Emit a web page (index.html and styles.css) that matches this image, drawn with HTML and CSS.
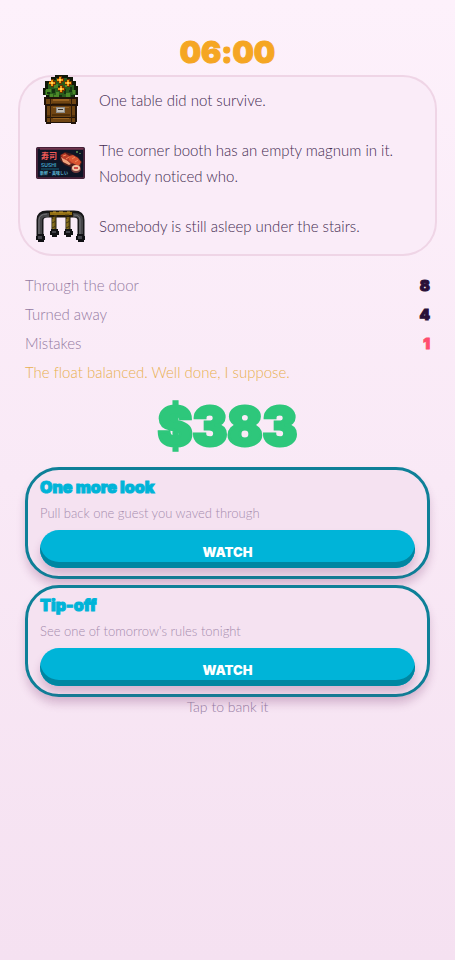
FILE: index.html
```
<!DOCTYPE html>
<html lang="en">
<head>
  <meta charset="UTF-8">
  <meta name="viewport" content="width=device-width, initial-scale=1">
  <title>Closing Time</title>
  <link rel="stylesheet" href="styles.css">
</head>
<body>

  <main class="summary">
    <h1 class="clock">06:00</h1>

    <ul class="events">
      <li class="event">
        <svg class="sprite" viewBox="0 0 50 50" aria-hidden="true">
          <!-- leaves -->
          <path fill="#101708" d="M15 2h4V0h13v2h5v4h3v5h2v9h-3v3H10v-3H7v-7h2V6h6z"/>
          <path fill="#295c1c" d="M16 5h4V3h11v3h5v4h2v5h2v5h-4v3H13v-3H9v-5h3V8h4z"/>
          <path fill="#4b8828" d="M10 14h5v3h-3v3h-2zM18 9h4v4h-4zM29 8h4v4h-4zM20 17h3v5h-5v-2h2zM30 18h4v4h-4zM36 15h3v4h-2zM14 19h3v3h-3zM24 3h2v2h-2z"/>
          <path fill="#14300f" d="M16 14h3v4h-3zM22 11h4v2h-4zM34 12h2v5h-3v-2h1zM28 14h2v5h-2zM11 17h3v2h-3zM23 20h3v2h-3zM35 20h3v2h-3z"/>
          <!-- flowers -->
          <path fill="#693000" d="M15 4h3v2h2v4h-2v2h-3v-2h-2V6h2zM23 1h3v2h2v4h-2v2h-3V7h-2V3h2zM31 4h3v2h2v4h-2v2h-3v-2h-2V6h2zM24 10h3v2h2v4h-2v2h-3v-2h-2v-4h2z"/>
          <path fill="#f39a12" d="M15 5h2v2h2v2h-2v2h-2V9h-2V7h2zM23 2h2v2h2v2h-2v2h-2V6h-2V4h2zM31 5h2v2h2v2h-2v2h-2V9h-2V7h2zM24 11h2v2h2v2h-2v2h-2v-2h-2v-2h2z"/>
          <path fill="#ffd55a" d="M15 7h2v2h-2zM23 4h2v2h-2zM31 7h2v2h-2zM24 13h2v2h-2z"/>
          <!-- crate -->
          <path fill="#211309" d="M8 22h34v9h-1v16h-1v2h-5v-1H15v1h-5v-2H9V30H8z"/>
          <path fill="#704513" d="M10 24h30v5H10zM11 31h28v11H11zM11 43h28v4H11z"/>
          <path fill="#986221" d="M17 24h16v2H17zM17 32h16v1H17zM17 43h16v1H17z"/>
          <path fill="#523009" d="M16 28h18v1H16zM16 39h18v2H16zM11 40h3v2h-3zM36 40h3v2h-3z"/>
          <path fill="#321c09" d="M14 24h1v23h-1zM35 24h1v23h-1zM16 30h18v1H16z"/>
          <path fill="#8e8c89" d="M20 32h9v6h-9z"/>
          <path fill="#c1bdb4" d="M21 33h7v4h-7z"/>
          <path fill="#342c27" d="M22 34h5v1h-5z"/>
        </svg>
        <p>One table did not survive.</p>
      </li>
      <li class="event">
        <svg class="sprite" viewBox="0 0 50 50" aria-hidden="true">
          <!-- neon sign -->
          <rect x="0" y="9" width="49" height="32" rx="2" fill="#191225"/>
          <rect x="1" y="10" width="47" height="30" rx="1" fill="#0e1425" stroke="#77304f"/>
          <path d="M4 11h43" stroke="#a34662"/>
          <text class="sign-kanji" x="5" y="21">寿司</text>
          <text class="sign-name" x="5" y="29">SUSHI</text>
          <path d="M5 31h18" stroke="#17637a"/>
          <text class="sign-small" x="4" y="37">新鮮・美味しい</text>
          <!-- sushi -->
          <path fill="#4d1d1c" d="M24 17l5-3 7 2 6 3 4 5-2 5-7 1-8-3-5-5z"/>
          <path fill="#f0a17c" d="M25 19l5 2 5 5-2 1-6-3z"/>
          <path fill="#b93d28" d="M25 17l4-2 6 4 3 5-2 2-4-3-6-3z"/>
          <path fill="#d95532" d="M33 18l4-1 5 3 3 4-2 4-5-2-5-4z"/>
          <path d="M27 18l3-1M30 21l3-2M36 21l3-2M39 24l3-2" stroke="#f28b5b"/>
          <ellipse cx="40" cy="31" rx="5" ry="4" fill="#773f3e"/>
          <ellipse cx="40" cy="30" rx="4" ry="3" fill="#f4c7a5"/>
          <path fill="#cf4a46" d="M38 29h4v2h-4z"/>
          <path fill="#477445" d="M40 13h2v2h-2zM43 15h2v1h-2z"/>
        </svg>
        <p>The corner booth has an empty magnum in it. Nobody noticed who.</p>
      </li>
      <li class="event">
        <svg class="sprite" viewBox="0 0 50 50" aria-hidden="true">
          <!-- outer pipe -->
          <path d="M4 37V19q0-6 7-6h27q7 0 7 6v18" fill="none" stroke="#171719" stroke-width="7"/>
          <path d="M4 36V19q0-5 7-5h27q7 0 7 5v17" fill="none" stroke="#454548" stroke-width="4"/>
          <path d="M3 35V19q0-6 8-6M44 35V19q0-5-6-5" fill="none" stroke="#77777a"/>
          <!-- inner legs -->
          <path d="M18 15v18M32 15v18" stroke="#211b0c" stroke-width="5"/>
          <path d="M18 16v16M32 16v16" stroke="#745d17" stroke-width="3"/>
          <path d="M17 18v10M31 18v10" stroke="#a28729"/>
          <path d="M16 27l4-2M30 27l4-2M16 22l4-2M30 22l4-2" stroke="#413513"/>
          <!-- feet and clamp -->
          <path fill="#111114" d="M1 33h7v2h1v4H8v2H2v-2H0v-4h1zM41 33h7v2h1v4h-1v2h-6v-2h-2v-4h1zM15 28h7v2h1v4h-2v2h-5v-2h-2v-4h1zM29 28h7v2h1v4h-2v2h-5v-2h-2v-4h1z"/>
          <path fill="#43434a" d="M2 35h4v3H2zM42 35h4v3h-4zM16 30h4v2h-4zM30 30h4v2h-4z"/>
          <path fill="#21190b" d="M13 10h24v6H13z"/>
          <path fill="#947116" d="M14 11h22v3H14z"/>
          <path d="M17 11h3M23 11h4M31 11h3" stroke="#c39c33"/>
          <path d="M18 15h3M29 14h4" stroke="#544314"/>
        </svg>
        <p>Somebody is still asleep under the stairs.</p>
      </li>
    </ul>

    <section class="report">
      <dl class="stats">
        <div class="stat"><dt>Through the door</dt><dd>8</dd></div>
        <div class="stat"><dt>Turned away</dt><dd>4</dd></div>
        <div class="stat"><dt>Mistakes</dt><dd class="bad">1</dd></div>
      </dl>
      <p class="remark">The float balanced. Well done, I suppose.</p>
      <p class="total">$383</p>

      <div class="offers">
        <article class="offer">
          <h2>One more look</h2>
          <p>Pull back one guest you waved through</p>
          <button type="button">WATCH</button>
        </article>
        <article class="offer">
          <h2>Tip-off</h2>
          <p>See one of tomorrow's rules tonight</p>
          <button type="button">WATCH</button>
        </article>
      </div>

      <p class="hint">Tap to bank it</p>
    </section>
  </main>

</body>
</html>
```
FILE: styles.css
```
* {
  box-sizing: border-box;
  margin: 0;
  padding: 0;
}

body {
  min-height: 100vh;
  background: linear-gradient(#fdf1fb, #f5e1f1);
  color: #2a1038;
  font-family: Lato, "Open Sans", sans-serif;
  font-size: 15px;
  font-weight: 300;
  font-variant-ligatures: none;
}

.summary {
  padding: 30px 18px;
}

.clock,
.stat dd,
.total,
.offer h2,
.offer button {
  font-family: Inter, "Liberation Sans", sans-serif;
  font-weight: 900;
}

.clock {
  height: 45px;
  line-height: 44px;
  font-size: 30px;
  text-align: center;
  color: #f5a623;
  -webkit-text-stroke: 1px #f5a623;
}

.events {
  display: flex;
  flex-direction: column;
  gap: 12px;
  padding: 0 18px 5px;
  list-style: none;
  border-radius: 34px;
  background: #faecf8;
  box-shadow: inset 0 0 0 2px #efd5e6;
}

.event {
  display: flex;
  align-items: center;
  gap: 13px;
  line-height: 26px;
  color: #432b50;
}

.sprite {
  flex: none;
  width: 50px;
  height: 50px;
}

.sign-kanji,
.sign-small {
  font-family: "Noto Sans CJK JP", sans-serif;
  font-weight: 700;
}

.sign-kanji {
  font-size: 8px;
  fill: #f05a57;
}

.sign-name {
  font-family: Inter, sans-serif;
  font-size: 5px;
  font-weight: 600;
  fill: #45a8cb;
}

.sign-small {
  font-size: 4px;
  fill: #5eb8d5;
}

.report {
  padding: 15px 7px 0;
}

.stat {
  display: flex;
  justify-content: space-between;
  line-height: 29px;
  color: #947aa1;
}

.stat dd {
  color: #2a1038;
  -webkit-text-stroke: 1px currentColor;
}

.stat dd.bad {
  color: #ff4d6d;
}

.remark {
  line-height: 29px;
  color: #e8b050;
}

.total {
  height: 80px;
  line-height: 80px;
  font-size: 52px;
  text-align: center;
  color: #2ec77b;
  -webkit-text-stroke: 3px #2ec77b;
}

.offers {
  display: flex;
  flex-direction: column;
  gap: 6px;
}

.offer {
  padding: 8px 12px;
  border: 3px solid #0e8098;
  border-radius: 34px;
  background: #f5e2f1;
  box-shadow: 0 7px 8px rgba(120, 50, 110, 0.24);
}

.offer h2 {
  line-height: 18px;
  font-size: 16px;
  color: #00b4d8;
  -webkit-text-stroke: 1px #00b4d8;
}

.offer p {
  margin: 4px 0;
  line-height: 26px;
  font-size: 13px;
  color: #a58cae;
}

.offer button {
  display: block;
  width: 100%;
  height: 38px;
  padding-top: 6px;
  border: 0;
  border-radius: 19px;
  background: #00b4d8;
  box-shadow: inset 0 -6px #0086a1, 0 7px 8px rgba(120, 50, 110, 0.24);
  color: #fff;
  font-size: 13px;
  cursor: pointer;
}

.hint {
  line-height: 20px;
  font-size: 14px;
  text-align: center;
  color: #947aa1;
}
```
